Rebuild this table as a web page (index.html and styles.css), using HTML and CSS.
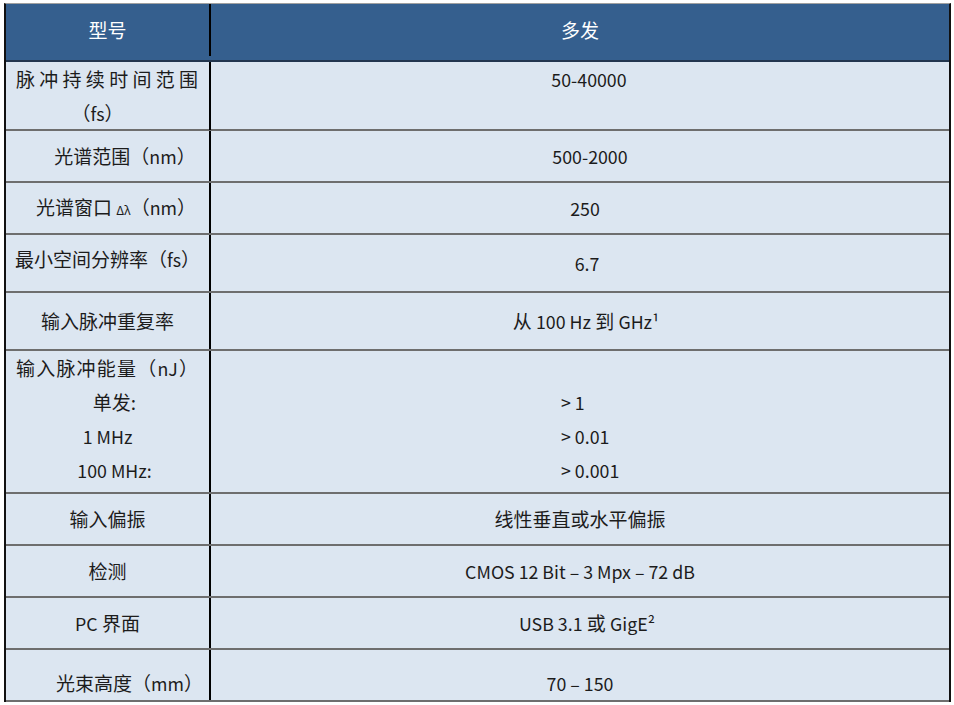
FILE: index.html
```html
<!DOCTYPE html>
<html lang="zh-CN">
<head>
<meta charset="utf-8">
<title>规格</title>
<link rel="stylesheet" href="styles.css">
</head>
<body>
<div class="spec">
  <div class="row head">
    <div class="c1"><div>型号</div></div>
    <div class="c2"><div>多发</div></div>
  </div>
  <div class="row h69 top">
    <div class="c1"><div class="just">脉冲持续时间范围</div><div class="pr20">（<span class="lat">fs</span>）</div></div>
    <div class="c2 lat"><div class="pl18">50-40000</div></div>
  </div>
  <div class="row h52">
    <div class="c1"><div class="pl35">光谱范围（<span class="lat">nm</span>）</div></div>
    <div class="c2 lat"><div class="pl20">500-2000</div></div>
  </div>
  <div class="row h52">
    <div class="c1"><div class="pl17">光谱窗口 <span class="small">Δλ</span>（<span class="lat">nm</span>）</div></div>
    <div class="c2 lat"><div class="pl10">250</div></div>
  </div>
  <div class="row h58">
    <div class="c1"><div class="pb8">最小空间分辨率（<span class="lat">fs</span>）</div></div>
    <div class="c2 lat"><div class="pl14">6.7</div></div>
  </div>
  <div class="row h58">
    <div class="c1"><div>输入脉冲重复率</div></div>
    <div class="c2"><div class="pl12">从 <span class="lat">100 Hz</span> 到 <span class="lat">GHz¹</span></div></div>
  </div>
  <div class="row h143 top">
    <div class="c1"><div class="just">输入脉冲能量（<span class="lat">nJ</span>）</div><div class="pl14">单发:</div><div class="lat">1 MHz</div><div class="lat pl14">100 MHz:</div></div>
    <div class="c2 lat list"><div>&nbsp;</div><div>&gt; 1</div><div>&gt; 0.01</div><div>&gt; 0.001</div></div>
  </div>
  <div class="row h52">
    <div class="c1"><div>输入偏振</div></div>
    <div class="c2"><div>线性垂直或水平偏振</div></div>
  </div>
  <div class="row h52">
    <div class="c1"><div>检测</div></div>
    <div class="c2 lat"><div>CMOS 12 Bit – 3 Mpx – 72 dB</div></div>
  </div>
  <div class="row h52">
    <div class="c1"><div><span class="lat">PC</span> 界面</div></div>
    <div class="c2"><div class="pl14"><span class="lat">USB 3.1</span> 或 <span class="lat">GigE²</span></div></div>
  </div>
  <div class="row h52 bottom">
    <div class="c1"><div class="pl44">光束高度（<span class="lat">mm</span>）</div></div>
    <div class="c2 lat"><div>70 – 150</div></div>
  </div>
</div>
</body>
</html>
```
FILE: styles.css
```css
html, body {
  margin: 0;
  padding: 0;
  background: #ffffff;
}
body {
  padding: 3px 3px 0 4px;
  font-family: "Noto Sans CJK SC", "Noto Sans", sans-serif;
  font-size: 19px;
  color: #1c1c1c;
}
.spec {
  width: 947px;
  box-sizing: border-box;
  border-top: 1px solid #a0a0a0;
  border-left: 2px solid #111111;
  border-right: 2px solid #111111;
  background: #dce6f1;
}
.row {
  display: grid;
  grid-template-columns: 205px 1fr;
  box-sizing: border-box;
  border-bottom: 2px solid #6e6e6e;
  line-height: 34px;
}
.c1, .c2 {
  display: flex;
  flex-direction: column;
  justify-content: center;
  text-align: center;
  white-space: nowrap;
}
.c1 {
  border-right: 2px solid #000000;
}
.head {
  height: 58px;
  background: #355f8e;
  color: #ffffff;
  border-bottom-color: #22364f;
  padding-bottom: 4px;
}
.top .c1, .top .c2 {
  justify-content: flex-start;
}
.bottom .c1, .bottom .c2 {
  justify-content: flex-end;
}
.h69 { height: 69px; }
.h52 { height: 52px; }
.h58 { height: 58px; }
.h143 { height: 143px; }
.lat {
  font-size: 17.8px;
}
.just {
  text-align: justify;
  text-align-last: justify;
  padding: 0 11px 0 10px;
}
.small {
  font-size: 12px;
}
.list {
  text-align: left;
  padding-left: 350px;
}
.pb8 { padding-bottom: 8px; }
.pr20 { padding-right: 20px; }
.pl10 { padding-left: 10px; }
.pl12 { padding-left: 12px; }
.pl14 { padding-left: 14px; }
.pl17 { padding-left: 17px; }
.pl18 { padding-left: 18px; }
.pl20 { padding-left: 20px; }
.pl35 { padding-left: 35px; }
.pl44 { padding-left: 44px; }
```
